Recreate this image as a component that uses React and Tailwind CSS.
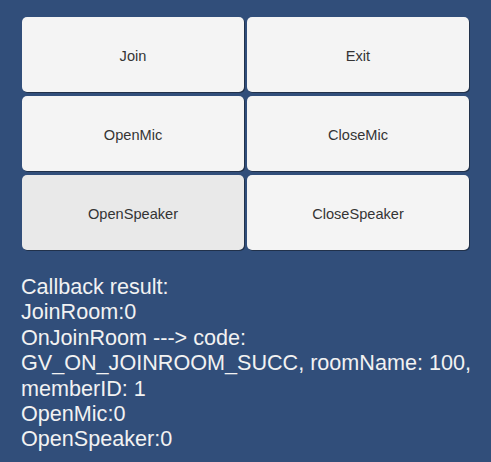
const buttons = [
  { label: 'Join' },
  { label: 'Exit' },
  { label: 'OpenMic' },
  { label: 'CloseMic' },
  { label: 'OpenSpeaker', active: true },
  { label: 'CloseSpeaker' },
];

const log = [
  'Callback result:',
  'JoinRoom:0',
  'OnJoinRoom ---> code:',
  'GV_ON_JOINROOM_SUCC, roomName: 100,',
  'memberID: 1',
  'OpenMic:0',
  'OpenSpeaker:0',
];

export default function App() {
  return (
    <div className="w-[491px] h-[462px] bg-[#314e7a] overflow-hidden font-['Liberation_Sans',Arial,sans-serif]">
      <div className="pl-[22px] pt-[17px] grid grid-cols-[222px_222px] auto-rows-[75px] gap-x-[3px] gap-y-[4px]">
        {buttons.map((b) => (
          <button
            key={b.label}
            className={`rounded-[5px] pt-[4px] text-[14.6px] text-[#343434] shadow-[1px_1px_0_rgba(20,25,35,0.55)] ${
              b.active ? 'bg-[#e9e9e9]' : 'bg-[#f4f4f4]'
            }`}
          >
            {b.label}
          </button>
        ))}
      </div>
      <div className="pl-[21px] pt-[24px] text-[21.6px] leading-[25.4px] text-[#f2f2f2]">
        {log.map((line) => (
          <div key={line}>{line}</div>
        ))}
      </div>
    </div>
  );
}
